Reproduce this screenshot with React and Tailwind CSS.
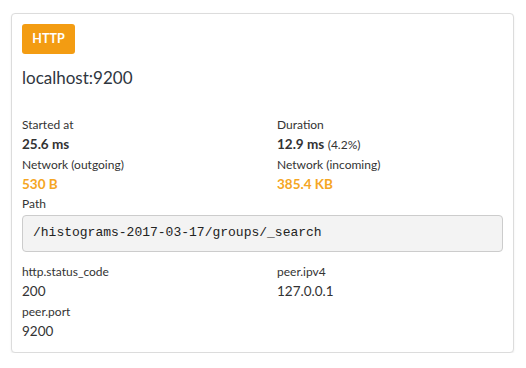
export default function App() {
  const font = { fontFamily: "Lato, 'Noto Sans', sans-serif" };
  return (
    <div className="pt-[13px] pl-[11px]" style={font}>
      <div className="w-[503px] border border-[#dcdcdc] rounded-[4px] bg-white p-[10px] shadow-[0_1px_2px_rgba(0,0,0,0.08)] text-[#333]">
        <div className="flex">
          <span className="h-[30px] w-[53px] justify-center flex items-center rounded-[3px] bg-[#f39c12] text-white font-bold text-[12.5px]">HTTP</span>
        </div>
        <div className="mt-[12px] text-[17px] leading-[24px] text-[#2f3640]">localhost:9200</div>
        <div className="mt-[24.5px] grid grid-cols-2 gap-x-[29px]">
          <div>
            <div className="text-[12px] leading-[19px]">Started at</div>
            <div className="text-[13.5px] leading-[20px] font-bold">25.6 ms</div>
          </div>
          <div>
            <div className="text-[12px] leading-[19px]">Duration</div>
            <div className="text-[13.5px] leading-[20px]"><span className="font-bold">12.9 ms</span> <span className="text-[12px]">(4.2%)</span></div>
          </div>
          <div>
            <div className="text-[12px] leading-[19px]">Network (outgoing)</div>
            <div className="text-[13.5px] leading-[20px] font-bold text-[#f5a623]">530 B</div>
          </div>
          <div>
            <div className="text-[12px] leading-[19px]">Network (incoming)</div>
            <div className="text-[13.5px] leading-[20px] font-bold text-[#f5a623]">385.4 KB</div>
          </div>
        </div>
        <div className="text-[12px] leading-[19px]">Path</div>
        <div className="mt-[2px] h-[37px] flex items-center px-[10px] bg-[#f3f3f3] border border-[#cccccc] rounded-[4px] text-[13px] text-[#222]" style={{ fontFamily: "'Liberation Mono', monospace" }}>
          /histograms-2017-03-17/groups/_search
        </div>
        <div className="mt-[10.5px] grid grid-cols-2 gap-x-[29px]">
          <div>
            <div className="text-[12px] leading-[19px]">http.status_code</div>
            <div className="text-[13.5px] leading-[21px]">200</div>
          </div>
          <div>
            <div className="text-[12px] leading-[19px]">peer.ipv4</div>
            <div className="text-[13.5px] leading-[21px]">127.0.0.1</div>
          </div>
          <div>
            <div className="text-[12px] leading-[19px]">peer.port</div>
            <div className="text-[13.5px] leading-[21px]">9200</div>
          </div>
        </div>
      </div>
    </div>
  );
}
